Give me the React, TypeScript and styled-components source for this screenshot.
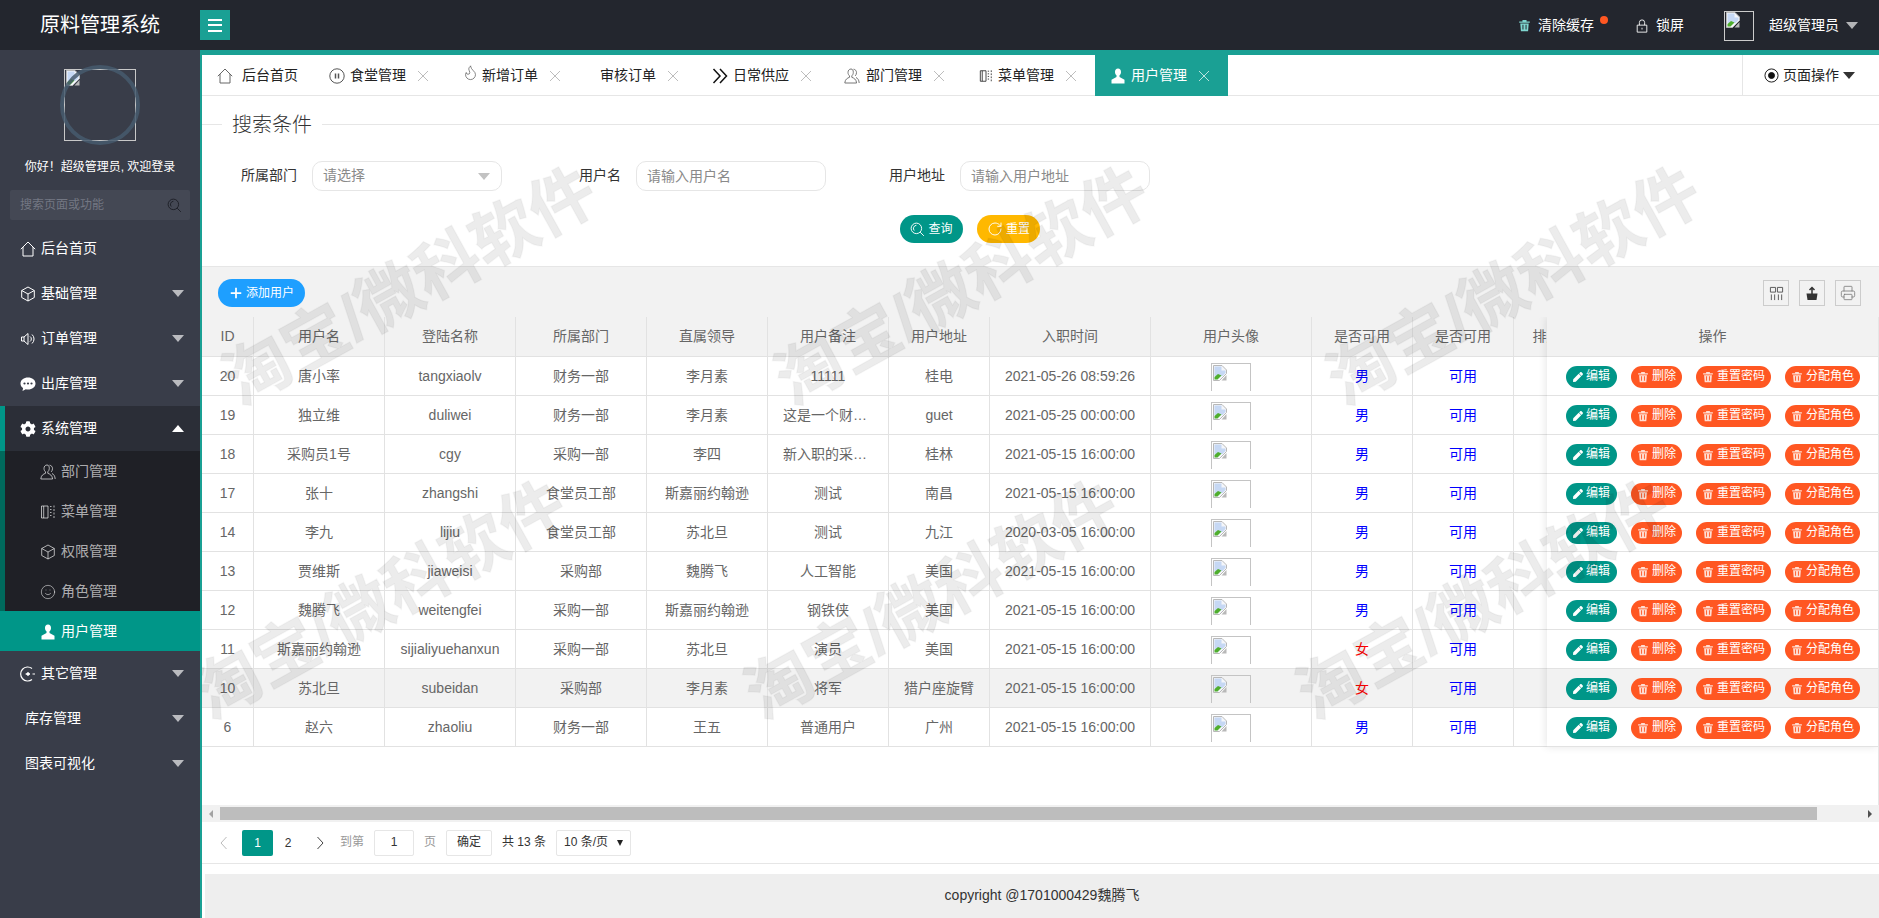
import React, { FC, ReactNode } from 'react';
import styled, { createGlobalStyle } from 'styled-components';
import { Flame, Printer, RotateCw, Smile } from 'lucide-react';
import { FaCog, FaPen } from 'react-icons/fa';

const teal = '#009688';
const stripe = '#1AA094';
const orange = '#FF5722';
const line = '#e2e2e2';

const GlobalStyle = createGlobalStyle`
  html, body {
    margin: 0;
    height: 100%;
    overflow: hidden;
  }
  body {
    font: 14px/1.4 "Liberation Sans", "Noto Sans CJK SC", sans-serif;
    color: #333;
    background: #fff;
  }
  * {
    box-sizing: border-box;
  }
`;

const StyledGlyph = styled.svg<{ $tone: string }>`
  flex: none;
  display: block;
  fill: none;
  stroke: ${(p) => p.$tone};
  stroke-width: 1;
`;

type GlyphProps = { size?: number; tone?: string; d?: string; children?: ReactNode };

const Glyph: FC<GlyphProps> = ({ size = 16, tone = 'currentColor', d, children }) => (
  <StyledGlyph $tone={tone} width={size} height={size} viewBox="0 0 16 16">
    {d && <path d={d} />}
    {children}
  </StyledGlyph>
);

type IconProps = { size?: number; tone?: string };

const HomeIcon: FC<IconProps> = (p) => <Glyph {...p} d="M.8 8.200 8 1l7.200 7.200M3 6v9h10V6" />;
const CubeIcon: FC<IconProps> = (p) => (
  <Glyph {...p} d="M8 1l6.300 3.500v7L8 15l-6.300-3.500v-7zM1.700 4.500 8 8l6.300-3.500M8 8v7" />
);
const SpeakerIcon: FC<IconProps> = (p) => (
  <Glyph {...p} d="M1.500 6h2.500l4-3.500v11L4 10H1.500zM4 6v4M10 5.500a3 3 0 0 1 0 5M12 3.500a6 6 0 0 1 0 9" />
);
const BubbleIcon: FC<IconProps> = ({ size = 16, tone = '#fff' }) => (
  <Glyph size={size} tone="none">
    <path
      fill={tone}
      d="M8 1.500c4.200 0 7.500 2.500 7.500 6s-3.300 6-7.500 6c-.8 0-1.500-.1-2.200-.3L2.500 15l.6-3C1.500 11 .5 9.500.5 7.500c0-3.500 3.300-6 7.500-6z"
    />
    <circle cx="4.500" cy="7.500" r="1.100" fill="#393D49" />
    <circle cx="8" cy="7.500" r="1.100" fill="#393D49" />
    <circle cx="11.500" cy="7.500" r="1.100" fill="#393D49" />
  </Glyph>
);
const PeopleIcon: FC<IconProps> = (p) => (
  <Glyph
    {...p}
    d="M7 1c-1.800 0-3 1.500-3 3.500 0 1.300.6 2.600 1.500 3.300v1.500C3.500 10 1 11.300.8 15h11.800c-.3-3.700-2.800-5-4.800-5.700V7.800c.9-.7 1.500-2 1.500-3.300C9.300 2.500 8.800 1 7 1zM9.500 1.200c1.800.2 3 1.500 3 3.500 0 1.300-.6 2.500-1.300 3.200M12 9.500c1.500.7 3 2.200 3.200 5.500"
  />
);
const MenuBookIcon: FC<IconProps> = (p) => (
  <Glyph {...p} d="M1.500 2h6.500v12H1.500zM3.700 2v12M10 2.500h1.500M10 5.500h1.500M10 8.500h1.500M10 11.500h1.500M14 1.500v2M14 5v2M14 8.500v2M14 12v2" />
);
const UserFillIcon: FC<IconProps> = ({ size = 16, tone = '#fff' }) => (
  <Glyph size={size} tone="none">
    <path
      fill={tone}
      d="M8 .5C6.100.5 5 2 5 3.900c0 1.300.6 2.600 1.500 3.300v1.900l-5 2.600v3.800h13v-3.800l-5-2.600V7.200c.9-.7 1.500-2 1.500-3.300C11 2 9.900.5 8 .5z"
    />
  </Glyph>
);
const OrbitIcon: FC<IconProps> = (p) => (
  <Glyph {...p}>
    <path strokeWidth="1.200" d="M12 2.500A7 7 0 1 0 12 13.500M5.500 8h4.500M12.500 8H15" />
    <circle cx="8" cy="8" r="1.300" fill="#fff" />
  </Glyph>
);
const PauseIcon: FC<IconProps> = (p) => (
  <Glyph {...p}>
    <circle cx="8" cy="8" r="7.200" />
    <path strokeWidth="1.500" d="M6.500 5.500v5M9.500 5.500v5" />
  </Glyph>
);
const ChevronPairIcon: FC<IconProps> = (p) => (
  <Glyph {...p}>
    <path strokeWidth="1.500" d="M1.500 1l6.500 7-6.500 7M8 1l6.500 7L8 15" />
  </Glyph>
);
const CrossIcon: FC<IconProps> = (p) => <Glyph {...p} d="M3 3l10 10M13 3 3 13" />;
const LockIcon: FC<IconProps> = (p) => (
  <Glyph {...p} d="M2.500 7h11v8h-11zM5 7V4a3 3 0 0 1 6 0v3M8 10v2" />
);
const SearchIcon: FC<IconProps> = (p) => (
  <Glyph {...p} d="M6.800 1.200a5.600 5.600 0 1 0 0 11.200 5.600 5.600 0 0 0 0-11.200zM6.800 3.500a3.400 3.400 0 0 0-2.300 5.600M10.800 10.800l4 4" />
);
const RingDotIcon: FC<IconProps> = ({ size = 16, tone = '#111' }) => (
  <Glyph size={size} tone={tone}>
    <circle cx="8" cy="8" r="7" />
    <circle cx="8" cy="8" r="3.200" fill={tone} />
  </Glyph>
);
const TrashIcon: FC<IconProps> = ({ size = 12, tone = '#fff' }) => (
  <Glyph size={size} tone="none">
    <path
      fill={tone}
      fillRule="evenodd"
      d="M1.500 3H5.500V1.200h5V3h4v1.500h-13zM2.800 5.500h10.400l-.8 9.500H3.600zM5.500 7v6h1.200V7zM9.300 7v6h1.200V7z"
    />
  </Glyph>
);
const ColumnsIcon: FC<IconProps> = (p) => (
  <Glyph {...p} d="M1.500 1.500h5.500v5H1.500zM9 1.500h5.500v5H9zM2.500 9v6M6 9v6M10 9v6M13.500 9v6" />
);
const ExportIcon: FC<IconProps> = ({ size = 16, tone = '#333' }) => (
  <Glyph size={size} tone="none">
    <path fill={tone} d="M2.500 8.500h11l-1 6.500h-9z" />
    <path stroke={tone} strokeWidth="1.500" d="M8 9V3M5.500 5 8 2.500 10.500 5" />
  </Glyph>
);
const BrokenSvg = styled.svg`
  display: block;
`;
const BrokenImage: FC = () => (
  <BrokenSvg width="16" height="16" viewBox="0 0 16 16">
    <path d="M1.500.5h8.500l4.500 4.500v3.500L7.500 15.500h-6z" fill="#f4f6fa" stroke="#b8b8b8" />
    <path d="M2.500 1.500h7v4h4v2.500l-3 3-8 .5z" fill="#c6d8f4" />
    <path d="M2.500 14.500v-2.500l3.500-3 3.500 1.500-4 4z" fill="#4fae2e" />
    <path d="M14.500 10v5.500H9.500z" fill="#b8b8b8" />
  </BrokenSvg>
);

const Page = styled.div`
  height: 100vh;
  display: flex;
  flex-direction: column;
`;

const TopBar = styled.header`
  height: 50px;
  flex: none;
  display: flex;
  align-items: center;
  background: #23262e;
  color: #fff;
`;

const Logo = styled.div`
  width: 200px;
  text-align: center;
  font-size: 20px;
`;

const MenuToggle = styled.button`
  width: 30px;
  height: 30px;
  padding: 0;
  border: 0;
  background: ${stripe};
  display: flex;
  flex-direction: column;
  align-items: center;
  justify-content: center;
  gap: 3.500px;

  span {
    width: 14px;
    height: 2px;
    background: #fff;
  }
`;

const TopActions = styled.div`
  margin-left: auto;
  padding: 1px 21px 0 0;
  display: flex;
  align-items: center;
`;

const TopAction = styled.span<{ $gap?: number }>`
  position: relative;
  display: flex;
  align-items: center;
  gap: 7px;
  margin-right: ${(p) => p.$gap ?? 0}px;
  font-size: 14px;
`;

const Dot = styled.i`
  position: absolute;
  right: -14px;
  top: 0;
  width: 8px;
  height: 8px;
  border-radius: 50%;
  background: ${orange};
`;

const TopAvatar = styled.span`
  width: 30px;
  height: 30px;
  margin-right: 15px;
  border: 1px solid #ccc;
  overflow: hidden;
`;

const Caret = styled.i<{ $up?: boolean; $tone?: string }>`
  flex: none;
  width: 0;
  height: 0;
  border-left: 6px solid transparent;
  border-right: 6px solid transparent;
  border-top: ${(p) => (p.$up ? '0' : `7px solid ${p.$tone ?? 'rgba(255,255,255,.65)'}`)};
  border-bottom: ${(p) => (p.$up ? `7px solid ${p.$tone ?? '#fff'}` : '0')};
`;

const SmallCaret = styled.i`
  flex: none;
  width: 0;
  height: 0;
  border-left: 3px solid transparent;
  border-right: 3px solid transparent;
  border-top: 6px solid #222;
`;

const Body = styled.div`
  flex: 1;
  min-height: 0;
  display: flex;
`;

const Sidebar = styled.aside`
  width: 200px;
  flex: none;
  background: #393d49;
  color: #fff;
  display: flex;
  flex-direction: column;
`;

const Profile = styled.div`
  padding-top: 19px;
  display: flex;
  flex-direction: column;
  align-items: center;
`;

const ProfileImage = styled.div`
  position: relative;
  width: 72px;
  height: 72px;
  border: 1px solid #c8c8c8;

  &::before {
    content: '';
    position: absolute;
    inset: -5px;
    border: 4px solid #475a6d;
    border-radius: 50%;
    opacity: 0.85;
  }
`;

const Greeting = styled.div`
  margin-top: 16px;
  height: 20px;
  line-height: 20px;
  font-size: 12px;
`;

const SideSearch = styled.div`
  margin: 13px 10px 6px;
  height: 30px;
  padding: 0 8px 0 10px;
  border-radius: 2px;
  background: #444854;
  display: flex;
  align-items: center;
  justify-content: space-between;
  font-size: 12px;
  color: #737783;
`;

const NavRow = styled.div<{ $open?: boolean }>`
  height: 45px;
  padding: 0 16px 0 20px;
  display: flex;
  align-items: center;
  gap: 5px;
  background: ${(p) => (p.$open ? '#2b2e37' : 'transparent')};
  box-shadow: ${(p) => (p.$open ? `inset 5px 0 0 ${teal}` : 'none')};

  > span {
    flex: 1;
  }
`;

const NavPlain = styled(NavRow)`
  padding-left: 25px;
`;

const SubNav = styled.div`
  background: #1f2026;
  box-shadow: inset 5px 0 0 #00695c;
`;

const SubRow = styled.div<{ $active?: boolean }>`
  height: 40px;
  padding: 1px 0 0 40px;
  display: flex;
  align-items: center;
  gap: 5px;
  color: ${(p) => (p.$active ? '#fff' : 'rgba(255,255,255,.65)')};
  background: ${(p) => (p.$active ? teal : 'transparent')};
`;

const Main = styled.main`
  position: relative;
  flex: 1;
  min-width: 0;
  display: flex;
  flex-direction: column;
  border-top: 5px solid ${stripe};
  border-left: 2px solid ${stripe};
  overflow: hidden;
`;

const TabBar = styled.nav`
  height: 41px;
  flex: none;
  display: flex;
  border-bottom: 1px solid #e6e6e6;
`;

const Tab = styled.div<{ $width: number; $active?: boolean; $start?: number }>`
  width: ${(p) => p.$width}px;
  height: ${(p) => (p.$active ? '41px' : '40px')};
  padding: 1px 0 0 ${(p) => p.$start ?? 15}px;
  display: flex;
  align-items: center;
  color: ${(p) => (p.$active ? '#fff' : '#222')};
  background: ${(p) => (p.$active ? stripe : 'transparent')};
`;

const TabIcon = styled.span<{ $width: number; $tone?: string }>`
  width: ${(p) => p.$width}px;
  flex: none;
  color: ${(p) => p.$tone ?? 'inherit'};
`;

const TabClose = styled.span<{ $tone: string }>`
  margin-left: 9px;
  color: ${(p) => p.$tone};
`;

const PageOps = styled.div`
  margin-left: auto;
  width: 137px;
  height: 40px;
  padding: 1px 0 0 21px;
  border-left: 1px solid #e6e6e6;
  display: flex;
  align-items: center;
  gap: 4px;
  color: #222;
`;

const SearchPanel = styled.section`
  height: 170px;
  flex: none;
  padding-top: 16px;
`;

const Legend = styled.div`
  height: 24px;
  display: flex;
  align-items: center;
  font-size: 20px;
  font-weight: 300;
  color: #333;

  span {
    padding-top: 2px;
  }

  &::before,
  &::after {
    content: '';
    height: 1px;
    background: #e6e6e6;
  }
  &::before {
    width: 20px;
    margin-right: 10px;
  }
  &::after {
    flex: 1;
    margin-left: 10px;
  }
`;

const FilterRow = styled.div`
  margin-top: 25px;
  display: flex;
  gap: 24px;
`;

const Field = styled.label`
  display: flex;
  align-items: center;
`;

const FieldLabel = styled.span`
  width: 110px;
  padding-right: 15px;
  text-align: right;
  color: #333;
`;

const TextBox = styled.input`
  width: 190px;
  height: 30px;
  padding: 0 10px;
  border: 1px solid #e6e6e6;
  border-radius: 10px;
  outline: none;
  font: inherit;

  &::placeholder {
    color: #8a8a8a;
  }
`;

const SelectBox = styled.div`
  width: 190px;
  height: 30px;
  padding: 0 11px 0 10px;
  border: 1px solid #e6e6e6;
  border-radius: 10px;
  display: flex;
  align-items: center;
  justify-content: space-between;
  color: #8a8a8a;
`;

const FilterActions = styled.div`
  margin-top: 24px;
  padding-left: 698px;
  display: flex;
  gap: 14px;
`;

const Pill = styled.button<{ $tone: string; $width: number; $height?: number }>`
  width: ${(p) => p.$width}px;
  height: ${(p) => p.$height ?? 28}px;
  padding: 0;
  border: 0;
  border-radius: 14px;
  background: ${(p) => p.$tone};
  color: #fff;
  font: inherit;
  font-size: 12px;
  display: inline-flex;
  align-items: center;
  justify-content: center;
  gap: 3px;
  white-space: nowrap;
`;

const Toolbar = styled.div`
  height: 51px;
  flex: none;
  padding: 12px 18px 0 16px;
  display: flex;
  justify-content: space-between;
  align-items: flex-start;
  background: #f2f2f2;
  border-top: 1px solid #e6e6e6;
`;

const ToolGroup = styled.div`
  padding-top: 1px;
  display: flex;
  gap: 10px;
`;

const ToolButton = styled.span`
  width: 26px;
  height: 26px;
  border: 1px solid #ccc;
  display: flex;
  align-items: center;
  justify-content: center;
  color: #555;
`;

const TableWrap = styled.div`
  position: relative;
  height: 488px;
  flex: none;
  overflow: hidden;
  border-right: 1px solid #e6e6e6;
`;

const Table = styled.table`
  width: 1378px;
  table-layout: fixed;
  border-collapse: separate;
  border-spacing: 0;
  color: #666;
`;

const HeadCell = styled.th<{ $width: number }>`
  width: ${(p) => p.$width}px;
  height: 40px;
  padding: 1px 15px 0;
  background: #f2f2f2;
  border-right: 1px solid ${line};
  border-bottom: 1px solid ${line};
  font-weight: 400;
  white-space: nowrap;
  overflow: hidden;
`;

const Row = styled.tr<{ $hover: boolean }>`
  background: ${(p) => (p.$hover ? '#f2f2f2' : '#fff')};
`;

const Cell = styled.td<{ $tone?: string }>`
  height: 39px;
  padding: 2px 15px 0;
  border-right: 1px solid ${line};
  border-bottom: 1px solid ${line};
  text-align: center;
  white-space: nowrap;
  overflow: hidden;
  text-overflow: ellipsis;
  color: ${(p) => p.$tone ?? 'inherit'};
`;

const AvatarClip = styled.div`
  width: 40px;
  height: 28px;
  margin: -1px auto 0;
  padding-top: 1px;
  border: 1px solid #c4c4c4;
  border-bottom: 0;
`;

const FixedColumn = styled.div`
  position: absolute;
  top: 0;
  right: 0;
  width: 331px;
  background: #fff;
  box-shadow: -1px 0 8px rgba(0, 0, 0, 0.1);
`;

const FixedHead = styled.div`
  height: 40px;
  padding-top: 1px;
  display: flex;
  align-items: center;
  justify-content: center;
  background: #f2f2f2;
  border-bottom: 1px solid ${line};
  color: #666;
`;

const FixedRow = styled.div<{ $hover: boolean }>`
  height: 39px;
  padding: 1px 0 0 19px;
  display: flex;
  align-items: center;
  gap: 14px;
  background: ${(p) => (p.$hover ? '#f2f2f2' : '#fff')};
  border-bottom: 1px solid ${line};
`;

const ScrollTrack = styled.div`
  height: 17px;
  flex: none;
  display: flex;
  align-items: center;
  justify-content: space-between;
  background: #f1f1f1;
`;

const ScrollArrow = styled.span<{ $right?: boolean }>`
  width: 18px;
  flex: none;
  display: flex;
  justify-content: center;

  &::before {
    content: '';
    border-top: 4px solid transparent;
    border-bottom: 4px solid transparent;
    border-left: ${(p) => (p.$right ? '4px solid #505050' : '0')};
    border-right: ${(p) => (p.$right ? '0' : '4px solid #a3a3a3')};
  }
`;

const ScrollThumb = styled.span`
  width: 1597px;
  height: 13px;
  margin-right: auto;
  background: #bdbdbd;
`;

const Pager = styled.div`
  height: 42px;
  flex: none;
  padding-left: 10px;
  display: flex;
  align-items: center;
  border-bottom: 1px solid #e6e6e6;
  font-size: 12px;
  color: #333;
`;

const PageArrow = styled.span<{ $width: number; $muted?: boolean }>`
  width: ${(p) => p.$width}px;
  padding-right: ${(p) => (p.$muted ? 6 : 0)}px;
  display: flex;
  justify-content: center;
  color: ${(p) => (p.$muted ? '#bbb' : '#444')};
`;

const PageNumber = styled.span<{ $active?: boolean }>`
  width: ${(p) => (p.$active ? 31 : 30)}px;
  height: 26px;
  line-height: 26px;
  text-align: center;
  border-radius: 2px;
  background: ${(p) => (p.$active ? teal : 'transparent')};
  color: ${(p) => (p.$active ? '#fff' : '#333')};
`;

const PagerText = styled.span<{ $left: number; $muted?: boolean }>`
  margin-left: ${(p) => p.$left}px;
  color: ${(p) => (p.$muted ? '#999' : '#333')};
`;

const PagerBox = styled.span<{ $width: number; $left: number }>`
  width: ${(p) => p.$width}px;
  height: 26px;
  margin-left: ${(p) => p.$left}px;
  border: 1px solid #e6e6e6;
  border-radius: 2px;
  display: flex;
  align-items: center;
  justify-content: center;
  gap: 9px;
`;

const Footer = styled.footer`
  height: 44px;
  flex: none;
  margin: 10px 0 0 3px;
  display: flex;
  align-items: center;
  justify-content: center;
  background: #eee;
  color: #333;
`;

const WatermarkLayer = styled.div`
  position: absolute;
  inset: 0;
  padding-top: 74px;
  overflow: hidden;
  pointer-events: none;
  z-index: 5;
`;

const WatermarkRow = styled.div<{ $shift: number }>`
  height: 314px;
  margin-left: ${(p) => p.$shift}px;
  display: flex;
`;

const WatermarkText = styled.div`
  width: 552px;
  flex: none;
  display: flex;
  align-items: center;
  justify-content: center;
  transform: rotate(-29deg);
  font-size: 66px;
  font-weight: 700;
  white-space: nowrap;
  color: rgba(0, 0, 0, 0.075);
  -webkit-text-stroke: 1.5px rgba(0, 0, 0, 0.03);
`;

const tabs = [
  { label: '后台首页', width: 112, lead: 25, tone: '#666', icon: <HomeIcon />, home: true },
  { label: '食堂管理', width: 133, lead: 21, tone: '#555', icon: <PauseIcon /> },
  { label: '新增订单', width: 133, lead: 20, tone: '#555', icon: <Flame size={17} strokeWidth={1} /> },
  { label: '审核订单', width: 117, lead: 0, start: 20 },
  { label: '日常供应', width: 132, lead: 21, tone: '#111', icon: <ChevronPairIcon /> },
  { label: '部门管理', width: 135, lead: 22, tone: '#777', icon: <PeopleIcon /> },
  { label: '菜单管理', width: 131, lead: 19, tone: '#333', icon: <MenuBookIcon size={14} /> },
  { label: '用户管理', width: 133, lead: 21, active: true, icon: <UserFillIcon /> }
];

const users = [
  ['20', '唐小率', 'tangxiaolv', '财务一部', '李月素', '11111', '桂电', '2021-05-26 08:59:26', '男'],
  ['19', '独立维', 'duliwei', '财务一部', '李月素', '这是一个财务部员工', 'guet', '2021-05-25 00:00:00', '男'],
  ['18', '采购员1号', 'cgy', '采购一部', '李四', '新入职的采购员工', '桂林', '2021-05-15 16:00:00', '男'],
  ['17', '张十', 'zhangshi', '食堂员工部', '斯嘉丽约翰逊', '测试', '南昌', '2021-05-15 16:00:00', '男'],
  ['14', '李九', 'lijiu', '食堂员工部', '苏北旦', '测试', '九江', '2020-03-05 16:00:00', '男'],
  ['13', '贾维斯', 'jiaweisi', '采购部', '魏腾飞', '人工智能', '美国', '2021-05-15 16:00:00', '男'],
  ['12', '魏腾飞', 'weitengfei', '采购一部', '斯嘉丽约翰逊', '钢铁侠', '美国', '2021-05-15 16:00:00', '男'],
  ['11', '斯嘉丽约翰逊', 'sijialiyuehanxun', '采购一部', '苏北旦', '演员', '美国', '2021-05-15 16:00:00', '女'],
  ['10', '苏北旦', 'subeidan', '采购部', '李月素', '将军', '猎户座旋臂', '2021-05-15 16:00:00', '女'],
  ['6', '赵六', 'zhaoliu', '财务一部', '王五', '普通用户', '广州', '2021-05-15 16:00:00', '男']
];

const columns: [string, number][] = [
  ['ID', 52],
  ['用户名', 131],
  ['登陆名称', 131],
  ['所属部门', 131],
  ['直属领导', 121],
  ['用户备注', 121],
  ['用户地址', 101],
  ['入职时间', 161],
  ['用户头像', 161],
  ['是否可用', 101],
  ['是否可用', 101],
  ['排序', 66]
];

const HOVER_ROW = 8;

const App: FC = () => (
  <>
    <GlobalStyle />
    <Page>
      <TopBar>
        <Logo>原料管理系统</Logo>
        <MenuToggle>
          <span />
          <span />
          <span />
        </MenuToggle>
        <TopActions>
          <TopAction $gap={41}>
            <TrashIcon size={13} tone="#7fd6d0" />
            清除缓存
            <Dot />
          </TopAction>
          <TopAction $gap={40}>
            <LockIcon size={14} tone="#fff" />
            锁屏
          </TopAction>
          <TopAvatar>
            <BrokenImage />
          </TopAvatar>
          <TopAction>
            超级管理员
            <Caret />
          </TopAction>
        </TopActions>
      </TopBar>
      <Body>
        <Sidebar>
          <Profile>
            <ProfileImage>
              <BrokenImage />
            </ProfileImage>
            <Greeting>你好！超级管理员, 欢迎登录</Greeting>
          </Profile>
          <SideSearch>
            搜索页面或功能
            <SearchIcon size={15} tone="#1d1f26" />
          </SideSearch>
          <NavRow>
            <HomeIcon tone="#fff" />
            <span>后台首页</span>
          </NavRow>
          <NavRow>
            <CubeIcon tone="#fff" />
            <span>基础管理</span>
            <Caret />
          </NavRow>
          <NavRow>
            <SpeakerIcon tone="#fff" />
            <span>订单管理</span>
            <Caret />
          </NavRow>
          <NavRow>
            <BubbleIcon />
            <span>出库管理</span>
            <Caret />
          </NavRow>
          <NavRow $open>
            <FaCog size={16} color="#fff" />
            <span>系统管理</span>
            <Caret $up />
          </NavRow>
          <SubNav>
            <SubRow>
              <PeopleIcon />
              部门管理
            </SubRow>
            <SubRow>
              <MenuBookIcon />
              菜单管理
            </SubRow>
            <SubRow>
              <CubeIcon />
              权限管理
            </SubRow>
            <SubRow>
              <Smile size={16} strokeWidth={1.2} />
              角色管理
            </SubRow>
            <SubRow $active>
              <UserFillIcon />
              用户管理
            </SubRow>
          </SubNav>
          <NavRow>
            <OrbitIcon tone="#fff" />
            <span>其它管理</span>
            <Caret />
          </NavRow>
          <NavPlain>
            <span>库存管理</span>
            <Caret />
          </NavPlain>
          <NavPlain>
            <span>图表可视化</span>
            <Caret />
          </NavPlain>
        </Sidebar>
        <Main>
          <TabBar>
            {tabs.map((tab) => (
              <Tab key={tab.label} $width={tab.width} $active={tab.active} $start={tab.start}>
                {tab.icon && (
                  <TabIcon $width={tab.lead} $tone={tab.tone}>
                    {tab.icon}
                  </TabIcon>
                )}
                {tab.label}
                {!tab.home && (
                  <TabClose $tone={tab.active ? 'rgba(255,255,255,.7)' : '#bdbdbd'}>
                    <CrossIcon size={16} />
                  </TabClose>
                )}
              </Tab>
            ))}
            <PageOps>
              <RingDotIcon size={15} />
              页面操作
              <Caret $tone="#333" />
            </PageOps>
          </TabBar>
          <SearchPanel>
            <Legend>
              <span>搜索条件</span>
            </Legend>
            <FilterRow>
              <Field>
                <FieldLabel>所属部门</FieldLabel>
                <SelectBox>
                  请选择
                  <Caret $tone="#c2c2c2" />
                </SelectBox>
              </Field>
              <Field>
                <FieldLabel>用户名</FieldLabel>
                <TextBox placeholder="请输入用户名" />
              </Field>
              <Field>
                <FieldLabel>用户地址</FieldLabel>
                <TextBox placeholder="请输入用户地址" />
              </Field>
            </FilterRow>
            <FilterActions>
              <Pill $tone={teal} $width={63}>
                <SearchIcon size={15} tone="#fff" />
                查询
              </Pill>
              <Pill $tone="#FFB800" $width={63}>
                <RotateCw size={16} strokeWidth={1.4} />
                重置
              </Pill>
            </FilterActions>
          </SearchPanel>
          <Toolbar>
            <Pill $tone="#1E9FFF" $width={87}>
              <Glyph size={14} tone="#fff">
                <path strokeWidth="2" d="M8 2v12M2 8h12" />
              </Glyph>
              添加用户
            </Pill>
            <ToolGroup>
              <ToolButton>
                <ColumnsIcon size={15} />
              </ToolButton>
              <ToolButton>
                <ExportIcon size={16} />
              </ToolButton>
              <ToolButton>
                <Printer size={16} strokeWidth={1.2} color="#777" />
              </ToolButton>
            </ToolGroup>
          </Toolbar>
          <TableWrap>
            <Table>
              <thead>
                <tr>
                  {columns.map(([title, width], i) => (
                    <HeadCell key={i} $width={width}>
                      {title}
                    </HeadCell>
                  ))}
                </tr>
              </thead>
              <tbody>
                {users.map((user, i) => (
                  <Row key={user[0]} $hover={i === HOVER_ROW}>
                    {user.slice(0, 8).map((value, k) => (
                      <Cell key={k}>{value}</Cell>
                    ))}
                    <Cell>
                      <AvatarClip>
                        <BrokenImage />
                      </AvatarClip>
                    </Cell>
                    <Cell $tone={user[8] === '女' ? '#f00' : '#00f'}>{user[8]}</Cell>
                    <Cell $tone="#00f">可用</Cell>
                    <Cell />
                  </Row>
                ))}
              </tbody>
            </Table>
            <FixedColumn>
              <FixedHead>操作</FixedHead>
              {users.map((user, i) => (
                <FixedRow key={user[0]} $hover={i === HOVER_ROW}>
                  <Pill $tone={teal} $width={51} $height={22}>
                    <FaPen size={10} />
                    编辑
                  </Pill>
                  <Pill $tone={orange} $width={51} $height={22}>
                    <TrashIcon size={12} tone="rgba(255,255,255,.8)" />
                    删除
                  </Pill>
                  <Pill $tone={orange} $width={75} $height={22}>
                    <TrashIcon size={12} tone="rgba(255,255,255,.8)" />
                    重置密码
                  </Pill>
                  <Pill $tone={orange} $width={75} $height={22}>
                    <TrashIcon size={12} tone="rgba(255,255,255,.8)" />
                    分配角色
                  </Pill>
                </FixedRow>
              ))}
            </FixedColumn>
          </TableWrap>
          <ScrollTrack>
            <ScrollArrow />
            <ScrollThumb />
            <ScrollArrow $right />
          </ScrollTrack>
          <Pager>
            <PageArrow $width={30} $muted>
              <Glyph size={16} d="M10.500 2 5 8l5.500 6" />
            </PageArrow>
            <PageNumber $active>1</PageNumber>
            <PageNumber>2</PageNumber>
            <PageArrow $width={33}>
              <Glyph size={16} d="M5.500 2l5.500 6-5.500 6" />
            </PageArrow>
            <PagerText $left={4} $muted>
              到第
            </PagerText>
            <PagerBox $width={40} $left={10}>
              1
            </PagerBox>
            <PagerText $left={10} $muted>
              页
            </PagerText>
            <PagerBox $width={46} $left={10}>
              确定
            </PagerBox>
            <PagerText $left={10}>共 13 条</PagerText>
            <PagerBox $width={75} $left={10}>
              10 条/页
              <SmallCaret />
            </PagerBox>
          </Pager>
          <Footer>copyright @1701000429魏腾飞</Footer>
          <WatermarkLayer>
            <WatermarkRow $shift={-68}>
              <WatermarkText>淘宝/微科软件</WatermarkText>
              <WatermarkText>淘宝/微科软件</WatermarkText>
              <WatermarkText>淘宝/微科软件</WatermarkText>
            </WatermarkRow>
            <WatermarkRow $shift={-98}>
              <WatermarkText>淘宝/微科软件</WatermarkText>
              <WatermarkText>淘宝/微科软件</WatermarkText>
              <WatermarkText>淘宝/微科软件</WatermarkText>
            </WatermarkRow>
          </WatermarkLayer>
        </Main>
      </Body>
    </Page>
  </>
);

export default App;
